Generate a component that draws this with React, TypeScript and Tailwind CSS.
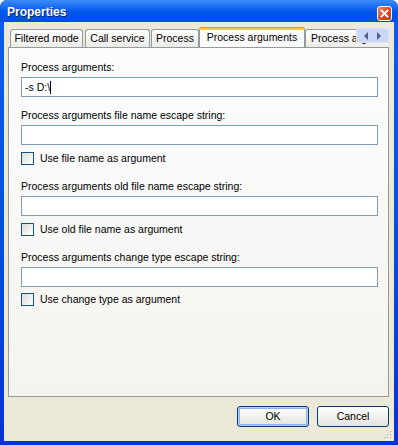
import React from 'react';

const font = "font-['Liberation_Sans',Arial,sans-serif]";

function Label({ text, className = '' }: { text: string; className?: string }) {
  return <div className={`h-[13px] leading-[13px] text-[10.5px] text-black whitespace-nowrap ${className}`}>{text}</div>;
}

function TextBox({ value, caret, className = '' }: { value?: string; caret?: boolean; className?: string }) {
  return (
    <div className={`h-[20px] mt-[3px] border border-[#7F9DB9] bg-white flex items-center pl-[3px] text-[10.5px] text-black ${className}`}>
      {value && <span className="leading-[13px] whitespace-pre">{value}</span>}
      {caret && <span className="w-px h-[13px] bg-black" />}
    </div>
  );
}

function CheckRow({ text, className = '' }: { text: string; className?: string }) {
  return (
    <div className={`flex items-center h-[13px] ${className}`}>
      <div className="w-[13px] h-[13px] border border-[#1C5180] bg-gradient-to-br from-[#DCDCD7] to-white" />
      <span className="ml-[6px] text-[10.5px] leading-[13px] text-black whitespace-nowrap">{text}</span>
    </div>
  );
}

function Tab({ label, active, className = '' }: { label: string; active?: boolean; className?: string }) {
  if (active) {
    return (
      <div className={`relative z-10 h-[21px] -mb-px shrink-0 flex flex-col rounded-t-[3px] border-x border-[#919B9C] bg-[#FCFCFE] ${className}`}>
        <div className="h-px bg-[#E68B2C] rounded-t-[3px]" />
        <div className="h-[2px] bg-[#FFC73C]" />
        <div className="flex-1 flex items-center justify-center text-[10.5px] text-black whitespace-nowrap pb-[2px]">{label}</div>
      </div>
    );
  }
  return (
    <div className={`h-[18px] shrink-0 flex items-center justify-center rounded-t-[3px] border border-b-0 border-[#919B9C] bg-gradient-to-b from-white to-[#ECEBE6] text-[10.5px] text-black whitespace-nowrap ${className}`}>
      {label}
    </div>
  );
}

export default function App() {
  return (
    <div className={`w-[398px] h-[445px] flex flex-col rounded-t-[7px] bg-gradient-to-b from-[#0A5EF0] via-[#0052E3] to-[#0831D9] ${font}`}>
      {/* title bar */}
      <div className="h-[22px] shrink-0 flex justify-between rounded-t-[7px] bg-gradient-to-b from-[#3D8CF7] via-[#0058EE] to-[#0050DF]">
        <span className="pl-[7px] pt-[5px] text-[12px] leading-[15px] font-bold text-white [text-shadow:1px_1px_0_#0A1E6E]">
          Properties
        </span>
        <div className="mt-[6px] mr-[6px] w-[15px] h-[15px] rounded-[3px] border border-white bg-gradient-to-br from-[#E98465] via-[#DC4A1F] to-[#C3381A] flex items-center justify-center">
          <svg width="9" height="9" viewBox="0 0 9 9">
            <path d="M1.5 1.5 L7.5 7.5 M7.5 1.5 L1.5 7.5" stroke="white" strokeWidth="1.8" strokeLinecap="square" />
          </svg>
        </div>
      </div>

      {/* body */}
      <div className="relative flex-1 mx-[4px] mb-[4px] bg-[#ECE9D8] flex flex-col pt-[5px] px-[4px]">
        {/* tab strip */}
        <div className="relative w-[381px] h-[20px] flex items-end overflow-hidden">
          <Tab label="Filtered mode" className="ml-[2px] w-[73px]" />
          <Tab label="Call service" className="ml-[2px] w-[65px]" />
          <Tab label="Process" className="ml-[1px] w-[48px]" />
          <Tab label="Process arguments" active className="w-[106px]" />
          <Tab label="Process arguments change" className="w-[110px] !justify-start pl-[5px]" />
          <div className="absolute right-0 top-[1px] w-[33px] h-[15px] bg-[#C9D6F6] border border-[#D8E2FA] flex items-center justify-around px-[3px]">
            <svg width="5" height="8" viewBox="0 0 5 8"><path d="M4 0 L0 4 L4 8 Z" fill="#4D6190" /></svg>
            <svg width="5" height="8" viewBox="0 0 5 8"><path d="M1 0 L5 4 L1 8 Z" fill="#4D6190" /></svg>
          </div>
        </div>

        {/* panel */}
        <div className="w-[381px] h-[350px] shrink-0 border border-[#919B9C] bg-gradient-to-b from-[#FCFCFE] to-[#F4F3EE] pl-[12px] pr-[10px] pt-[13px] flex flex-col">
          <Label text="Process arguments:" />
          <TextBox value="-s D:\" caret />

          <Label text="Process arguments file name escape string:" className="mt-[12px]" />
          <TextBox />
          <CheckRow text="Use file name as argument" className="mt-[7px]" />

          <Label text="Process arguments old file name escape string:" className="mt-[15px]" />
          <TextBox />
          <CheckRow text="Use old file name as argument" className="mt-[7px]" />

          <Label text="Process arguments change type escape string:" className="mt-[15px]" />
          <TextBox />
          <CheckRow text="Use change type as argument" className="mt-[6px]" />
        </div>

        {/* buttons */}
        <div className="mt-[9px] flex justify-end gap-[8px] pr-[1px]">
          <button className="w-[72px] h-[21px] rounded-[3px] border border-[#003C74] bg-gradient-to-b from-white to-[#E3E3DB] shadow-[inset_0_0_0_1px_#B9D1FA,inset_0_0_0_2px_#8CB0F3] text-[10.5px] text-black">
            OK
          </button>
          <button className="w-[72px] h-[21px] rounded-[3px] border border-[#003C74] bg-gradient-to-b from-white to-[#E3E3DB] text-[10.5px] text-black">
            Cancel
          </button>
        </div>

        {/* size grip */}
        <svg className="absolute right-[1px] bottom-[1px]" width="10" height="10" viewBox="0 0 10 10">
          {[[8, 2], [8, 5], [5, 5], [8, 8], [5, 8], [2, 8]].map(([x, y]) => (
            <g key={`${x}-${y}`}>
              <rect x={x} y={y} width="1.5" height="1.5" fill="#FFFFFF" />
              <rect x={x - 1} y={y - 1} width="1.5" height="1.5" fill="#C2BFB0" />
            </g>
          ))}
        </svg>
      </div>
    </div>
  );
}
